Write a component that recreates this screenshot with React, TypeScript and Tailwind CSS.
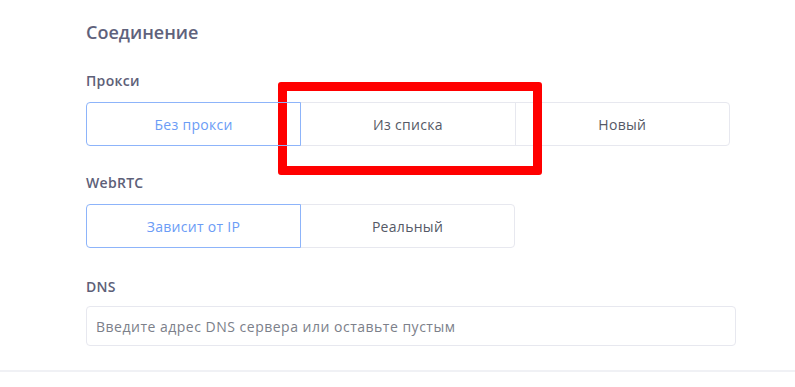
import React, { useState } from 'react';

const FONT = { fontFamily: '"Open Sans", "Noto Sans", sans-serif' };

interface SegmentedProps {
  options: string[];
  value: number;
  onChange: (i: number) => void;
  width: string;
}

function Segmented({ options, value, onChange, width }: SegmentedProps) {
  return (
    <div className={`flex h-[44px] ${width}`}>
      {options.map((label, i) => {
        const active = i === value;
        const first = i === 0;
        const last = i === options.length - 1;
        return (
          <button
            key={label}
            onClick={() => onChange(i)}
            className={`relative flex-1 border text-[14px] tracking-[0.3px] ${first ? 'rounded-l-[4px]' : '-ml-px'} ${last ? 'rounded-r-[4px]' : ''} ${
              active
                ? 'z-10 border-[#8db4fa] text-[#6b9cf6]'
                : 'border-[#e7e8ef] text-[#555966]'
            }`}
          >
            {label}
          </button>
        );
      })}
    </div>
  );
}

export default function App() {
  const [proxy, setProxy] = useState(0);
  const [webrtc, setWebrtc] = useState(0);

  return (
    <div className="relative w-[795px] h-[387px] overflow-hidden bg-white" style={FONT}>
      <div className="pt-[20px] pl-[86px]">
        <h2 className="text-[18px] leading-[24px] font-semibold text-[#5f627c]">Соединение</h2>

        <div className="mt-[27px] text-[14px] tracking-[0.3px] leading-[20px] font-semibold text-[#5d6078]">Прокси</div>
        <div className="mt-[11px]">
          <Segmented
            options={['Без прокси', 'Из списка', 'Новый']}
            value={proxy}
            onChange={setProxy}
            width="w-[644px]"
          />
        </div>

        <div className="mt-[27px] text-[14px] tracking-[0.3px] leading-[20px] font-semibold text-[#5d6078]">WebRTC</div>
        <div className="mt-[11px]">
          <Segmented
            options={['Зависит от IP', 'Реальный']}
            value={webrtc}
            onChange={setWebrtc}
            width="w-[429px]"
          />
        </div>

        <div className="mt-[29px] text-[14px] tracking-[0.3px] leading-[20px] font-semibold text-[#5d6078]">DNS</div>
        <input
          className="mt-[9px] block h-[40px] w-[650px] rounded-[4px] border border-[#e7e8ef] px-[9px] text-[14px] tracking-[0.5px] text-[#555966] placeholder:text-[#7c808a] outline-none"
          placeholder="Введите адрес DNS сервера или оставьте пустым"
        />
      </div>

      <div className="mt-[24px] h-[2px] w-full bg-[#f0f1f5]" />

      {/* red highlight over the "Из списка" option */}
      <div className="pointer-events-none absolute left-[278px] top-[82px] w-[264px] h-[93px] rounded-[3px] border-[9px] border-[#ff0000]" />
    </div>
  );
}
